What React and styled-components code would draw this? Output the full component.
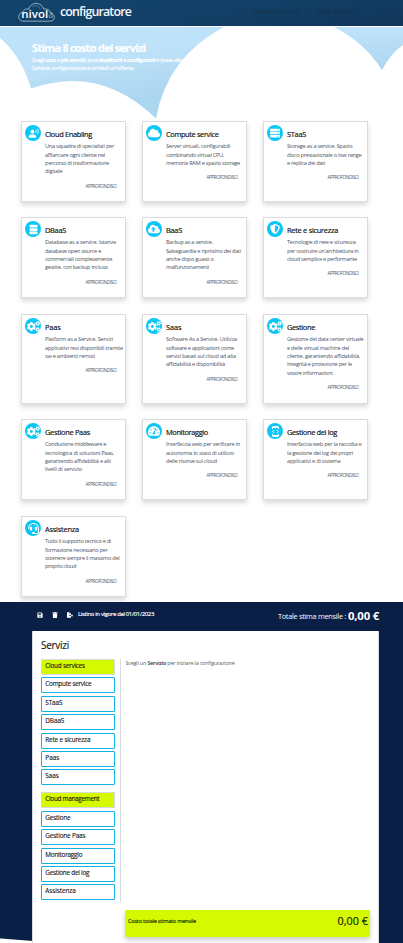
import React, { useLayoutEffect, useRef } from "react";
import styled, { createGlobalStyle, css } from "styled-components";
import { FaCloud, FaDatabase, FaServer, FaCloudUploadAlt, FaShieldAlt, FaCogs, FaTachometerAlt, FaHeadset, FaSave, FaTrash, FaFileExport } from "react-icons/fa";

const Global = createGlobalStyle`
  *, *::before, *::after { box-sizing: border-box; }
  html, body { margin: 0; padding: 0; background: #fff; overflow: hidden; }
`;

const Page = styled.div`
  width: 403px;
  height: 943px;
  overflow: hidden;
  display: flex;
  flex-direction: column;
  font-family: "Open Sans", "Noto Sans", sans-serif;
  color: #222;
  background: #fff;
`;

const Line = styled.span`
  display: block;
  width: max-content;
  white-space: nowrap;
`;

/* One line of text whose tracking is adjusted to fill a given measure. */
function Fit({ w, children, ...rest }) {
  const ref = useRef(null);
  useLayoutEffect(() => {
    const el = ref.current;
    el.style.letterSpacing = "0px";
    const natural = el.getBoundingClientRect().width;
    el.style.letterSpacing = `${(w - natural) / el.textContent.length}px`;
  }, [w]);
  return <Line ref={ref} {...rest}>{children}</Line>;
}

/* ---------- header ---------- */
const Header = styled.header`
  flex: none;
  height: 26px;
  display: flex;
  align-items: flex-start;
  padding: 2px 0 0 18px;
  background: linear-gradient(170deg, #12456c 0%, #123f66 55%, #12365a 100%);
  color: #fff;
`;
const Logo = styled.svg`
  width: 37px;
  height: 21px;
  flex: none;
  font-family: "Open Sans", sans-serif;
`;
const Brand = styled.div`
  width: 190px;
  margin-left: 5px;
  font-size: 12.4px;
  font-weight: 600;
  line-height: 20px;
  color: #f4f8fb;
`;
const TopNav = styled.nav`
  display: flex;
  gap: 17px;
  margin-left: 1px;
  font-size: 6.2px;
  line-height: 20px;
  color: #18304b;
`;

/* ---------- hero ---------- */
const Hero = styled.section`
  flex: none;
  height: 94px;
  margin-top: 1px;
  display: grid;
  > * { grid-area: 1 / 1; }
`;
const Sky = styled.svg`
  width: 403px;
  height: 94px;
  display: block;
`;
const HeroText = styled.div`
  padding: 12px 0 0 32px;
  color: #fff;
  font-size: 5.7px;
  line-height: 7.8px;
  -webkit-text-stroke: 0.12px #fff;
`;
const HeroTitle = styled.h1`
  margin: 0 0 1px;
  font-size: 11.4px;
  font-weight: 700;
  line-height: 17px;
`;

/* ---------- cards ---------- */
const Cards = styled.main`
  flex: none;
  height: 481px;
  padding-left: 21.3px;
  display: grid;
  grid-template-columns: repeat(3, 121px);
  grid-template-rows: 96px 97px 105px 97px 81px;
`;
const Card = styled.article`
  width: 104.6px;
  height: ${(p) => (p.$tall ? 90 : 81)}px;
  display: grid;
  grid-template-columns: 16px 1fr;
  column-gap: 3.7px;
  align-content: start;
  padding: 3px 0 0 3px;
  border: 1px solid #dcdcdc;
  background: #fff;
  box-shadow: 0 3px 5px rgba(0, 0, 0, 0.15);
`;
const Badge = styled.span`
  width: 16px;
  height: 16px;
  border-radius: 50%;
  background: #0cc6f5;
  color: #fff;
  display: flex;
  align-items: center;
  justify-content: center;
  > svg { width: ${(p) => p.$size || 10}px; height: ${(p) => p.$size || 10}px; }
`;
const CardBody = styled.div`
  min-width: 0;
  font-size: 5.6px;
  line-height: 8.3px;
  color: #4c545f;
`;
const CardTitle = styled.h2`
  margin: 3.6px 0 2.8px;
  font-size: 7.4px;
  line-height: 11px;
  font-weight: 500;
  color: #0b0b0b;
  -webkit-text-stroke: 0.15px #0b0b0b;
`;
const More = styled.a`
  display: block;
  width: 31px;
  margin: 6px 0 0 40.5px;
  font-size: 4.6px;
  line-height: 8px;
  color: #4c5a6e;
`;

/* ---------- configurator ---------- */
const Config = styled.section`
  flex: none;
  height: 341px;
  padding: 0 0 0 32px;
  background: linear-gradient(184.5deg, #0a1f45 0, #0a1f45 366.5px, #fff 367.5px);
`;
const Toolbar = styled.div`
  width: 347px;
  height: 29px;
  display: flex;
  align-items: flex-start;
  padding: 4px 0 0 5px;
  color: #fff;
`;
const Tools = styled.div`
  display: flex;
  gap: 9px;
  padding-top: 5.5px;
  width: 41px;
  svg { width: 6px; height: 6px; flex: none; }
`;
const PriceList = styled.div`
  width: 200px;
  font-size: 5.9px;
  line-height: 17px;
  font-weight: 500;
  -webkit-text-stroke: 0.15px #fff;
`;
const Total = styled.div`
  display: flex;
  align-items: center;
  gap: 2px;
  font-size: 7.3px;
  line-height: 20px;
`;
const Amount = styled.strong`
  font-size: ${(p) => (p.$strong ? 11.3 : 10.8)}px;
  font-weight: ${(p) => (p.$strong ? 700 : 500)};
`;
const Panel = styled.div`
  width: 347px;
  height: 320px;
  padding: 7px 8px 0 8px;
  border: 1px solid #d9dde3;
  border-top: 0;
  background: #fff;
  border-radius: 1px 1px 0 0;
`;
const PanelTitle = styled.h2`
  margin: 0;
  font-size: 10px;
  line-height: 15px;
  font-weight: 500;
  color: #111;
  -webkit-text-stroke: 0.12px #111;
`;
const PanelGrid = styled.div`
  display: grid;
  grid-template-columns: 79.5px 1fr;
  grid-template-rows: 243px auto;
  row-gap: 8px;
  margin-top: 6px;
`;
const Side = styled.nav`
  display: flex;
  flex-direction: column;
  gap: 7px;
  border-right: 1px solid #d8dbe0;
`;
const Group = styled.div`
  display: flex;
  flex-direction: column;
  gap: 2.4px;
`;
const Entry = styled.div`
  width: 74px;
  height: 16px;
  padding-left: 3.3px;
  border: 1px solid #0eb2e3;
  border-radius: 1px;
  font-size: 6.4px;
  line-height: 12.6px;
  color: #151515;
  -webkit-text-stroke: 0.12px #151515;
  background: #fff;
  ${(p) => p.$head && css`
    background: #d4f900;
    border-color: #d5d9dc;
  `}
`;
const Hint = styled.div`
  padding-left: 5px;
  font-size: 5.5px;
  line-height: 8px;
  color: #5a5f66;
  strong { color: #333; font-weight: 600; }
`;
const Cost = styled.div`
  grid-column: 2;
  width: 245px;
  height: 27px;
  margin-left: 4.5px;
  display: flex;
  justify-content: space-between;
  padding: 0 2px 6px 3px;
  align-items: center;
  border-radius: 1px;
  background: #d4f900;
  box-shadow: 0 3px 5px rgba(0, 0, 0, 0.2);
  font-size: 5.6px;
  color: #10200a;
  -webkit-text-stroke: 0.12px #10200a;
`;

const UsersIcon = () => (
  <svg viewBox="0 0 12 12" fill="currentColor">
    <circle cx="4.8" cy="4" r="2.1" />
    <path d="M.8 10.5V9.3C.8 7.7 2.5 6.8 4.8 6.8s4 .9 4 2.5v1.2z" />
    <path d="M8 2.1c1.2.6 1.2 2.6 0 3.3M9.8.8c2 1.4 2 4.2 0 5.8" fill="none" stroke="currentColor" strokeWidth="1" />
  </svg>
);
const DatabaseIcon = () => (
  <svg viewBox="0 0 12 12" fill="currentColor">
    <rect x="1.5" y=".8" width="9" height="3" rx="1.2" />
    <rect x="1.5" y="4.5" width="9" height="3" rx="1.2" />
    <rect x="1.5" y="8.2" width="9" height="3" rx="1.2" />
  </svg>
);
const LogIcon = () => (
  <svg viewBox="0 0 12 12" fill="none" stroke="currentColor" strokeWidth="1">
    <path d="M2.8 3.4V1h6.4v2.4M2.8 8.6V11h6.4V8.6" />
    <path d="M2.8 1.2h6.4M2.8 10.8h6.4" strokeWidth="1.8" />
    <path d="M4.6 4.3 2.9 6l1.7 1.7M7.4 4.3 9.1 6 7.4 7.7" />
  </svg>
);

const cards = [
  { icon: UsersIcon, size: 11, t: ["Cloud Enabling", 47], l: [["Una squadra di specialisti per", 69], ["affiancare ogni cliente nel", 60], ["percorso di trasformazione", 64], ["digitale", 17.5]] },
  { icon: FaCloud, size: 12, t: ["Compute service", 52.5], l: [["Server virtuali, configurabili", 64], ["combinando virtual CPU,", 58], ["memoria RAM e spazio storage", 74]] },
  { icon: FaServer, t: ["STaaS", 19], l: [["Storage as a service. Spazio", 65.5], ["disco prestazionale o low range", 74.5], ["e replica dei dati", 38]] },
  { icon: DatabaseIcon, size: 11, t: ["DBaaS", 21], l: [["Database as a service. Istanze", 71], ["database open source e", 56], ["commerciali completamente", 67], ["gestite, con backup incluso", 63]] },
  { icon: FaCloudUploadAlt, size: 12, t: ["BaaS", 16], l: [["Backup as a service.", 47], ["Salvaguardia e ripristino dei dati", 75], ["anche dopo guasti o", 47.5], ["malfunzionamenti", 43]] },
  { icon: FaShieldAlt, t: ["Rete e sicurezza", 51], l: [["Tecnologie di rete e sicurezza", 68.5], ["per costruire un'architettura in", 71.5], ["cloud semplice e performante", 70]] },
  { icon: FaCogs, size: 13, t: ["Paas", 15.5], tall: true, l: [["Platform as a Service. Servizi", 68], ["applicativi resi disponibili tramite", 78], ["sw e ambienti remoti", 50]] },
  { icon: FaCogs, size: 13, t: ["Saas", 15.5], tall: true, l: [["Software As a Service. Utilizza", 71], ["software e applicazioni come", 68], ["servizi basati sul cloud ad alta", 70], ["affidabilità e disponibilità", 59]] },
  { icon: FaCogs, size: 13, t: ["Gestione", 28], tall: true, l: [["Gestione del data center virtuale", 76.5], ["e delle virtual machine del", 62], ["cliente, garantendo affidabilità,", 73], ["integrità e protezione per le", 65], ["vostre informazioni", 45.5]] },
  { icon: FaCogs, size: 13, t: ["Gestione Paas", 45], l: [["Conduzione middleware e", 61], ["tecnologica di soluzioni Paas,", 69], ["garantendo affidabilità e alti", 66], ["livelli di servizio", 37]] },
  { icon: FaTachometerAlt, size: 12, t: ["Monitoraggio", 42], l: [["Interfaccia web per verificare in", 74], ["autonomia lo stato di utilizzo", 68], ["delle risorse sul cloud", 51]] },
  { icon: LogIcon, size: 11, t: ["Gestione dei log", 50], l: [["Interfaccia web per la raccolta e", 74.5], ["la gestione dei log dei propri", 66], ["applicativi e di sistema", 53.5]] },
  { icon: FaHeadset, size: 11, t: ["Assistenza", 34], l: [["Tutto il supporto tecnico e di", 66], ["formazione necessario per", 62.5], ["ottenere sempre il massimo del", 74.5], ["proprio cloud", 31]] },
];

const groups = [
  [["Cloud services", 39.5], ["Compute service", 46], ["STaaS", 17], ["DBaaS", 19], ["Rete e sicurezza", 45], ["Paas", 14], ["Saas", 13.5]],
  [["Cloud management", 54], ["Gestione", 25], ["Gestione Paas", 40], ["Monitoraggio", 37], ["Gestione dei log", 44], ["Assistenza", 30.5]],
];

export default function App() {
  return (
    <Page>
      <Global />
      <Header>
        <Logo viewBox="0 0 37 21">
          <path d="M6 19.2C1.8 19.2.6 16.6.8 14.4 1 12 2.8 10.4 5 10.3 5.4 7.8 7.7 6.4 10.4 7.1 12 3.3 15 1.3 18.2 1.4c3.8.1 6.6 2.2 7.6 5.7 4-.6 6.2 1 6.5 4.2 2.7.5 4.1 2 4 4-.1 2.3-1.5 3.9-4 3.9z" fill="none" stroke="#c7d7e4" strokeWidth=".7" />
          <path d="M10.4 7.1c1.5.3 2.4 1.1 3 2.1M14.2 5c2-2 5.9-2 8 1.7" fill="none" stroke="#90abc0" strokeWidth=".5" />
          <text x="3.2" y="16.2" fontSize="10.5" fontWeight="600" fill="#fff" textLength="27" lengthAdjust="spacingAndGlyphs">nivol</text>
          <text x="30.3" y="16.2" fontSize="10" fill="#8aa5bb" textLength="5" lengthAdjust="spacingAndGlyphs">a</text>
        </Logo>
        <Brand><Fit w={71}>configuratore</Fit></Brand>
        <TopNav><Fit w={48}>Documentazione</Fit><Fit w={40}>Cos'è Nivola ?</Fit></TopNav>
      </Header>
      <Hero>
        <Sky viewBox="0 0 403 94">
          <defs>
            <linearGradient id="sky" gradientUnits="userSpaceOnUse" x1="0" y1="0" x2="15" y2="92">
              <stop offset="0" stopColor="#bde2fb" />
              <stop offset=".5" stopColor="#bee2f9" />
              <stop offset="1" stopColor="#acd5ef" />
            </linearGradient>
            <linearGradient id="skyRight" x1="0" y1="0" x2="0" y2="1">
              <stop offset="0" stopColor="#bfe3fa" />
              <stop offset="1" stopColor="#add6f0" />
            </linearGradient>
          </defs>
          <path d="M0 0H224Q167 30 156 91.5Q100 37 31 61.5Q22 30 0 11z" fill="url(#sky)" />
          <path d="M334 0H403V18Q391 26 382 43Q364 15 334 0z" fill="url(#skyRight)" />
        </Sky>
        <HeroText>
          <HeroTitle><Fit w={113}>Stima il costo dei servizi</Fit></HeroTitle>
          <Fit w={158}>Scegli <b>uno</b> o <b>più servizi</b>, puoi <b>duplicarli</b> e <b>configurarli</b> in base alle tue</Fit>
          <Fit w={102}>Salva la configurazione e richiedi un'offerta.</Fit>
        </HeroText>
      </Hero>
      <Cards>
        {cards.map(({ icon: Icon, size, t, l, tall }) => (
          <Card key={t[0]} $tall={tall}>
            <Badge $size={size}><Icon /></Badge>
            <CardBody>
              <CardTitle><Fit w={t[1]}>{t[0]}</Fit></CardTitle>
              {l.map(([s, w]) => <Fit key={s} w={w}>{s}</Fit>)}
              <More><Fit w={31}>APPROFONDISCI</Fit></More>
            </CardBody>
          </Card>
        ))}
      </Cards>
      <Config>
        <Toolbar>
          <Tools><FaSave /><FaTrash /><FaFileExport /></Tools>
          <PriceList><Fit w={76}>Listino in vigore dal 01/01/2023</Fit></PriceList>
          <Total><Fit w={68}>Totale stima mensile :</Fit><Amount $strong><Fit w={31}>0,00 €</Fit></Amount></Total>
        </Toolbar>
        <Panel>
          <PanelTitle><Fit w={28}>Servizi</Fit></PanelTitle>
          <PanelGrid>
            <Side>
              {groups.map((g) => (
                <Group key={g[0][0]}>
                  {g.map(([s, w], i) => <Entry key={s} $head={i === 0}><Fit w={w}>{s}</Fit></Entry>)}
                </Group>
              ))}
            </Side>
            <Hint><Fit w={109}>Scegli un <strong>Servizio</strong> per iniziare la configurazione</Fit></Hint>
            <Cost><Fit w={68}>Costo totale stimato mensile</Fit><Amount><Fit w={30.5}>0,00 €</Fit></Amount></Cost>
          </PanelGrid>
        </Panel>
      </Config>
    </Page>
  );
}
